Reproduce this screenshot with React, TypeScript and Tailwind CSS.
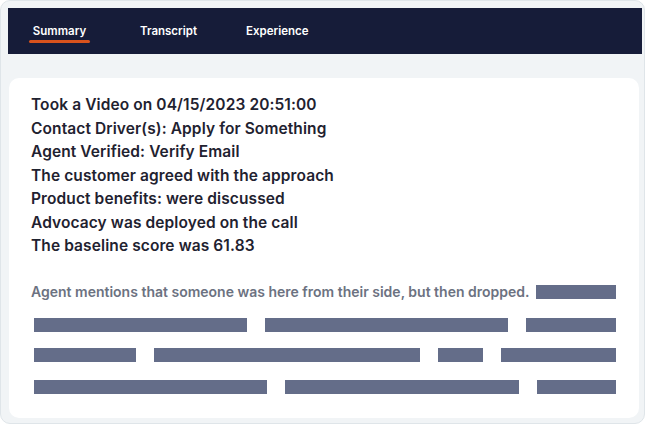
import React from "react";

const font = { fontFamily: "Inter, 'Noto Sans', sans-serif" };

function Bar({ w }: { w?: number }) {
  return w ? (
    <div className="h-[14px] shrink-0 bg-[#646d89]" style={{ width: w }} />
  ) : (
    <div className="h-[14px] flex-1 bg-[#646d89]" />
  );
}

export default function App() {
  const lines = [
    "Took a Video on 04/15/2023 20:51:00",
    "Contact Driver(s): Apply for Something",
    "Agent Verified: Verify Email",
    "The customer agreed with the approach",
    "Product benefits: were discussed",
    "Advocacy was deployed on the call",
    "The baseline score was 61.83",
  ];
  return (
    <div className="w-[648px] h-[426px] bg-white" style={font}>
      <div className="w-[645px] h-[424px] rounded-[10px] border border-[#dfe5e9] bg-[#f1f4f6] pt-[7px] pl-[7px] pr-[3px] flex flex-col">
        <div className="h-[46px] bg-[#161c39] flex items-start pl-[21px] pt-[15px] mr-[-1px]">
          <div className="flex flex-col items-center w-[61px]">
            <span className="text-[11.5px] font-semibold text-white leading-[16px]">Summary</span>
            <span className="mt-[1px] h-[3px] w-[61px] rounded-full bg-[#d8521d]" />
          </div>
          <span className="ml-[50px] text-[11.5px] font-semibold text-white leading-[16px]">Transcript</span>
          <span className="ml-[49px] text-[11.5px] font-semibold text-white leading-[16px]">Experience</span>
        </div>
        <div className="mt-[24px] ml-[1px] mr-[2px] h-[340px] rounded-[10px] bg-white pl-[22px] pr-[22px] pt-[15px]">
          <div className="flex flex-col">
            {lines.map((l) => (
              <div key={l} className="text-[15.5px] font-semibold text-[#1f2230] leading-[23.5px] tracking-[0.1px]">
                {l}
              </div>
            ))}
          </div>
          <div className="mt-[27px] ml-[3px] w-[582px] flex flex-col">
            <div className="flex items-center justify-between h-[14px]">
              <span className="-ml-[3px] text-[14px] font-semibold text-[#6c7281] whitespace-nowrap">
                Agent mentions that someone was here from their side, but then dropped.
              </span>
              <Bar w={80} />
            </div>
            <div className="mt-[19px] flex gap-[18px]">
              <Bar w={213} />
              <Bar w={243} />
              <Bar />
            </div>
            <div className="mt-[16px] flex gap-[18px]">
              <Bar w={102} />
              <Bar w={266} />
              <Bar w={45} />
              <Bar />
            </div>
            <div className="mt-[18px] flex gap-[18px]">
              <Bar w={233} />
              <Bar w={234} />
              <Bar />
            </div>
          </div>
        </div>
      </div>
    </div>
  );
}
